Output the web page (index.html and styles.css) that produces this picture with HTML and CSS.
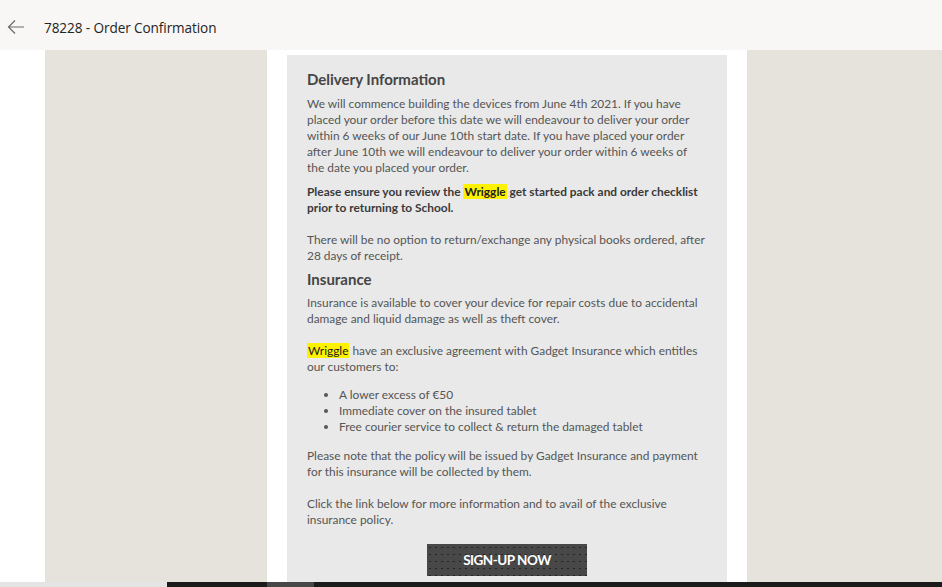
FILE: index.html
```html
<!DOCTYPE html>
<html>
<head>
<meta charset="utf-8">
<link rel="stylesheet" href="styles.css">
</head>
<body>
<header class="topbar">
  <svg class="back" width="18" height="16" viewBox="0 0 18 16"><path d="M17 8H2M8 1.5L1.5 8L8 14.5" fill="none" stroke="#6b6a69" stroke-width="1.2"/></svg>
  <span class="title">78228 - Order Confirmation</span>
</header>
<main class="layout">
  <div class="gutter"></div>
  <div class="side"></div>
  <div class="gap"></div>
  <section class="mail">
    <h2>Delivery Information</h2>
    <p>We will commence building the devices from June 4th 2021. If you have<br>placed your order before this date we will endeavour to deliver your order<br>within 6 weeks of our June 10th start date. If you have placed your order<br>after June 10th we will endeavour to deliver your order within 6 weeks of<br>the date you placed your order.</p>
    <p class="strong">Please ensure you review the <mark>Wriggle</mark> get started pack and order checklist<br>prior to returning to School.</p>
    <p class="tight"><br>There will be no option to return/exchange any physical books ordered, after<br>28 days of receipt.</p>
    <h2 class="h2b">Insurance</h2>
    <p>Insurance is available to cover your device for repair costs due to accidental<br>damage and liquid damage as well as theft cover.<br><br><mark>Wriggle</mark> have an exclusive agreement with Gadget Insurance which entitles<br>our customers to:</p>
    <ul>
      <li>A lower excess of €50</li>
      <li>Immediate cover on the insured tablet</li>
      <li>Free courier service to collect &amp; return the damaged tablet</li>
    </ul>
    <p>Please note that the policy will be issued by Gadget Insurance and payment<br>for this insurance will be collected by them.<br><br>Click the link below for more information and to avail of the exclusive<br>insurance policy.</p>
    <div class="cta"><a class="btn">SIGN-UP NOW</a></div>
  </section>
  <div class="gap"></div>
  <div class="side"></div>
</main>
<div class="bottom">
  <div class="b1"></div><div class="b2"></div><div class="b3"></div><div class="b4"></div>
</div>
</body>
</html>
```
FILE: styles.css
```css
html, body { margin: 0; padding: 0; }
body {
  width: 942px;
  height: 587px;
  overflow: hidden;
  background: #ffffff;
  font-family: Lato, "Open Sans", sans-serif;
}
.topbar {
  height: 50px;
  background: #f8f7f5;
  display: flex;
  align-items: center;
  box-sizing: border-box;
  padding-left: 7px;
  padding-top: 4px;
}
.back { margin-right: 19px; margin-top: -1px; }
.title {
  font-family: "Open Sans", sans-serif;
  font-size: 13.6px;
  color: #252423;
  letter-spacing: -0.1px;
}
.layout {
  display: grid;
  grid-template-columns: 45px 222px 20px 440px 20px 195px;
  height: 537px;
}
.side { background: #e6e3dc; }
.mail {
  background: #e9e9e9;
  margin-top: 5px;
  padding: 14px 20px 0 20px;
  color: #555555;
  font-size: 11.9px;
  line-height: 16px;
  overflow: hidden;
}
.mail h2 {
  margin: 0 0 7px 0;
  font-size: 15px;
  font-weight: 700;
  color: #454545;
  line-height: 20px;
}
.mail .h2b { margin-top: 5px; margin-bottom: 6px; }
.mail p { margin: 0 0 8px 0; white-space: nowrap; }
.mail p.tight { margin-bottom: 0; }
.mail .strong { font-weight: 700; color: #3a3a3a; margin-bottom: 0; }
mark { background: #fff200; color: #222; padding: 0 1px; }
.mail ul { margin: 12px 0 13px 0; padding-left: 32px; }
.mail li { line-height: 16px; }
.cta { display: flex; justify-content: center; margin-top: 16px; }
.btn {
  width: 160px;
  height: 32px;
  display: flex;
  align-items: center;
  justify-content: center;
  color: #ffffff;
  font-weight: 700;
  font-size: 13.5px;
  letter-spacing: -0.5px;
  background-color: #484848;
  background-image: radial-gradient(circle, #252525 0.6px, transparent 0.9px);
  background-size: 6px 7px;
}
.bottom {
  position: fixed;
  left: 0; right: 0; bottom: 0;
  height: 5px;
  display: flex;
}
.b1 { width: 167px; background: #e4e4e4; }
.b2 { width: 100px; background: #1b1b1b; }
.b3 { width: 47px; background: #474747; }
.b4 { flex: 1; background: #1b1b1b; }
```
